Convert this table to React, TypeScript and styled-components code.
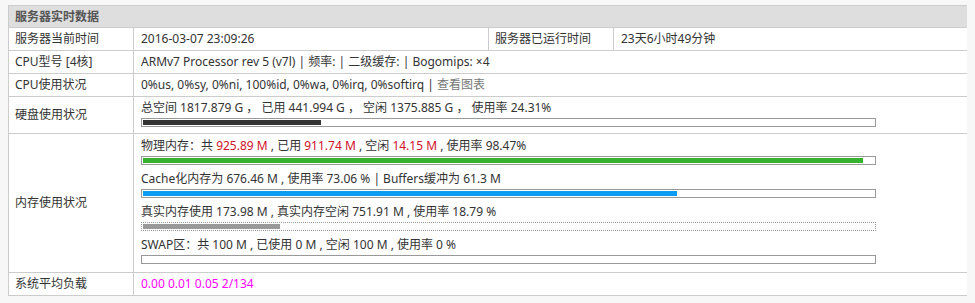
import React from 'react';
import styled, { createGlobalStyle } from 'styled-components';

const GlobalStyle = createGlobalStyle`
  body {
    margin: 5px 8px;
    background: #f7f7f7;
    font-family: 'Noto Sans', 'Noto Sans CJK SC', sans-serif;
    font-size: 12px;
    color: #333;
  }
`;

const Table = styled.table`
  width: 960px;
  border-collapse: collapse;
  background: #fff;
  box-shadow: 2px 2px 2px #cfcfcf;
  line-height: 16px;
`;

const HeadCell = styled.th`
  height: 21px;
  padding: 0 6px;
  border: 1px solid #ccc;
  background: #dedede;
  color: #555;
  font-weight: bold;
  text-align: left;
`;

const Label = styled.td<{ $width?: number }>`
  width: ${(p) => (p.$width ? `${p.$width}px` : 'auto')};
  height: 22px;
  padding: 0 6px;
  border: 1px solid #ccc;
  vertical-align: middle;
  white-space: nowrap;
`;

const Value = styled.td`
  padding: 0 7px;
  height: 22px;
  border: 1px solid #ccc;
  vertical-align: middle;
  white-space: nowrap;
`;

const Stack = styled.div<{ $top: number; $bottom: number }>`
  display: flex;
  flex-direction: column;
  gap: 6px;
  padding: ${(p) => p.$top}px 0 ${(p) => p.$bottom}px;
`;

const Group = styled.div`
  display: flex;
  flex-direction: column;
  gap: 2px;
`;

const Bar = styled.div<{ $dotted?: boolean }>`
  width: 731px;
  height: 5px;
  padding: 1px;
  border: 1px ${(p) => (p.$dotted ? 'dotted' : 'solid')} #999;
`;

const Fill = styled.div<{ $color: string }>`
  height: 5px;
  background: ${(p) => p.$color};
`;

const Red = styled.span`
  color: #d0102a;
`;

const Link = styled.span`
  color: #777;
`;

const Load = styled.span`
  color: #f0f;
`;

const Meter = ({ pct, color, dotted }: { pct: number; color: string; dotted?: boolean }) => (
  <Bar $dotted={dotted}>
    <Fill $color={color} style={{ width: `${pct}%` }} />
  </Bar>
);

export default function App() {
  return (
    <>
      <GlobalStyle />
      <Table>
        <thead>
          <tr>
            <HeadCell colSpan={4}>服务器实时数据</HeadCell>
          </tr>
        </thead>
        <tbody>
          <tr>
            <Label $width={112}>服务器当前时间</Label>
            <Value style={{ width: 340 }}>2016-03-07 23:09:26</Value>
            <Label $width={112}>服务器已运行时间</Label>
            <Value>23天6小时49分钟</Value>
          </tr>
          <tr>
            <Label>CPU型号 [4核]</Label>
            <Value colSpan={3}>ARMv7 Processor rev 5 (v7l) | 频率: | 二级缓存: | Bogomips: ×4</Value>
          </tr>
          <tr>
            <Label>CPU使用状况</Label>
            <Value colSpan={3}>
              0%us, 0%sy, 0%ni, 100%id, 0%wa, 0%irq, 0%softirq | <Link>查看图表</Link>
            </Value>
          </tr>
          <tr>
            <Label>硬盘使用状况</Label>
            <Value colSpan={3}>
              <Stack $top={3} $bottom={6}>
                <Group>
                  <span>总空间 1817.879 G ， 已用 441.994 G ， 空闲 1375.885 G ， 使用率 24.31%</span>
                  <Meter pct={24.31} color="#333" />
                </Group>
              </Stack>
            </Value>
          </tr>
          <tr>
            <Label>内存使用状况</Label>
            <Value colSpan={3}>
              <Stack $top={4} $bottom={8}>
                <Group>
                  <span>
                    物理内存：共 <Red>925.89 M</Red> , 已用 <Red>911.74 M</Red> , 空闲 <Red>14.15 M</Red> , 使用率 98.47%
                  </span>
                  <Meter pct={98.47} color="#36b22e" />
                </Group>
                <Group>
                  <span>Cache化内存为 676.46 M , 使用率 73.06 % | Buffers缓冲为 61.3 M</span>
                  <Meter pct={73.06} color="#0a9cf2" />
                </Group>
                <Group>
                  <span>真实内存使用 173.98 M , 真实内存空闲 751.91 M , 使用率 18.79 %</span>
                  <Meter pct={18.79} color="#999" dotted />
                </Group>
                <Group>
                  <span>SWAP区：共 100 M , 已使用 0 M , 空闲 100 M , 使用率 0 %</span>
                  <Meter pct={0} color="#999" />
                </Group>
              </Stack>
            </Value>
          </tr>
          <tr>
            <Label>系统平均负载</Label>
            <Value colSpan={3}>
              <Load>0.00 0.01 0.05 2/134</Load>
            </Value>
          </tr>
        </tbody>
      </Table>
    </>
  );
}
